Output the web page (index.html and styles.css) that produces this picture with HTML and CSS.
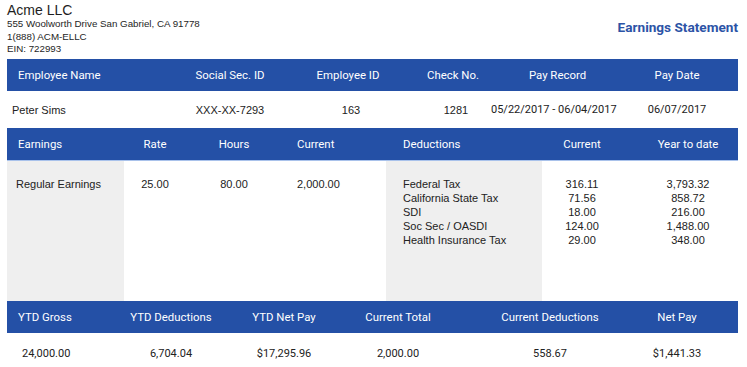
FILE: index.html
```html
<!DOCTYPE html>
<html lang="en">
<head>
<meta charset="utf-8">
<title>Earnings Statement</title>
<link rel="stylesheet" href="styles.css">
</head>
<body>
<div class="page">
  <header class="top">
    <div class="company">
      <div class="company-name">Acme LLC</div>
      <div class="company-line">555 Woolworth Drive San Gabriel, CA 91778</div>
      <div class="company-line">1(888) ACM-ELLC</div>
      <div class="company-line">EIN: 722993</div>
    </div>
    <div class="doc-title">Earnings Statement</div>
  </header>

  <section class="info">
    <div class="bar info-grid">
      <div class="cell first">Employee Name</div>
      <div class="cell">Social Sec. ID</div>
      <div class="cell">Employee ID</div>
      <div class="cell">Check No.</div>
      <div class="cell">Pay Record</div>
      <div class="cell">Pay Date</div>
    </div>
    <div class="row info-grid">
      <div class="cell first sans">Peter Sims</div>
      <div class="cell sans">XXX-XX-7293</div>
      <div class="cell sans shift-r">163</div>
      <div class="cell sans shift-r">1281</div>
      <div class="cell roboto shift-l">05/22/2017 - 06/04/2017</div>
      <div class="cell roboto">06/07/2017</div>
    </div>
  </section>

  <section class="details">
    <div class="bar bar-lined detail-grid">
      <div class="cell first">Earnings</div>
      <div class="cell">Rate</div>
      <div class="cell">Hours</div>
      <div class="cell left cur">Current</div>
      <div class="cell left ded">Deductions</div>
      <div class="cell">Current</div>
      <div class="cell ytd">Year to date</div>
    </div>
    <div class="detail-body detail-grid">
      <div class="dcell shade earn">Regular Earnings</div>
      <div class="dcell center">25.00</div>
      <div class="dcell center">80.00</div>
      <div class="dcell cur">2,000.00</div>
      <div class="dcell shade ded">
        <div>Federal Tax</div>
        <div>California State Tax</div>
        <div>SDI</div>
        <div>Soc Sec / OASDI</div>
        <div>Health Insurance Tax</div>
      </div>
      <div class="dcell center">
        <div>316.11</div>
        <div>71.56</div>
        <div>18.00</div>
        <div>124.00</div>
        <div>29.00</div>
      </div>
      <div class="dcell center ytd">
        <div>3,793.32</div>
        <div>858.72</div>
        <div>216.00</div>
        <div>1,488.00</div>
        <div>348.00</div>
      </div>
    </div>
  </section>

  <section class="totals">
    <div class="bar totals-grid">
      <div class="cell first">YTD Gross</div>
      <div class="cell">YTD Deductions</div>
      <div class="cell">YTD Net Pay</div>
      <div class="cell">Current Total</div>
      <div class="cell cd">Current Deductions</div>
      <div class="cell">Net Pay</div>
    </div>
    <div class="row totals-grid roboto">
      <div class="cell first val-first">24,000.00</div>
      <div class="cell">6,704.04</div>
      <div class="cell">$17,295.96</div>
      <div class="cell">2,000.00</div>
      <div class="cell cd">558.67</div>
      <div class="cell">$1,441.33</div>
    </div>
  </section>
</div>
</body>
</html>
```

FILE: styles.css
```css
html, body {
  margin: 0;
  padding: 0;
  background: #ffffff;
}

body {
  font-family: "Liberation Sans", Arial, sans-serif;
  color: #222222;
}

.page {
  width: 731px;
  padding: 0 9px 0 7px;
}

/* top header */
.top {
  display: flex;
  justify-content: space-between;
  align-items: flex-start;
  height: 59px;
}

.company-name {
  font-size: 14px;
  line-height: 16px;
  padding-top: 2px;
  color: #1e1e1e;
}

.company-line {
  font-size: 9.75px;
  line-height: 12.5px;
  color: #1e1e1e;
}

.doc-title {
  font-family: Roboto, "Liberation Sans", sans-serif;
  font-weight: 700;
  font-size: 13.6px;
  color: #2c53a6;
  margin-top: 19px;
}

/* bars */
.bar {
  background: #2450a6;
  color: #ffffff;
  font-family: Roboto, "Liberation Sans", sans-serif;
  font-size: 11.4px;
  height: 32px;
  align-items: center;
}

.bar-lined {
  border-bottom: 1px solid #a9c2eb;
}

.row {
  font-size: 11px;
  align-items: center;
}

.cell {
  text-align: center;
  white-space: nowrap;
}

.cell.first {
  text-align: left;
  padding-left: 11px;
}

.sans {
  font-family: "Liberation Sans", Arial, sans-serif;
}

.roboto {
  font-family: Roboto, "Liberation Sans", sans-serif;
}

/* info table */
.info-grid {
  display: grid;
  grid-template-columns: 164px 118px 118px 92px 117px 122px;
}

.info .row {
  height: 37px;
}

.info .row .cell.first {
  padding-left: 5px;
}

.shift-r {
  padding-left: 6px;
}

.shift-l {
  margin-left: -8px;
}

/* details */
.detail-grid {
  display: grid;
  grid-template-columns: 117px 62px 96px 104px 156px 80px 116px;
}

.cell.left {
  text-align: left;
}

.cur {
  padding-left: 15px;
}

.ded {
  padding-left: 17px;
}

.ytd {
  padding-left: 16px;
}

.detail-body {
  height: 140px;
  font-size: 11px;
  line-height: 14px;
}

.dcell {
  padding-top: 16px;
}

.dcell.center {
  text-align: center;
}

.shade {
  background: #efefef;
}

.earn {
  padding-left: 9px;
}

/* totals */
.totals-grid {
  display: grid;
  grid-template-columns: 108px 112px 114px 114px 161px 122px;
}

.totals .row {
  height: 34px;
  padding-top: 3px;
}

.cd {
  padding-left: 29px;
}

.cell.val-first {
  padding-left: 15px;
}
```
